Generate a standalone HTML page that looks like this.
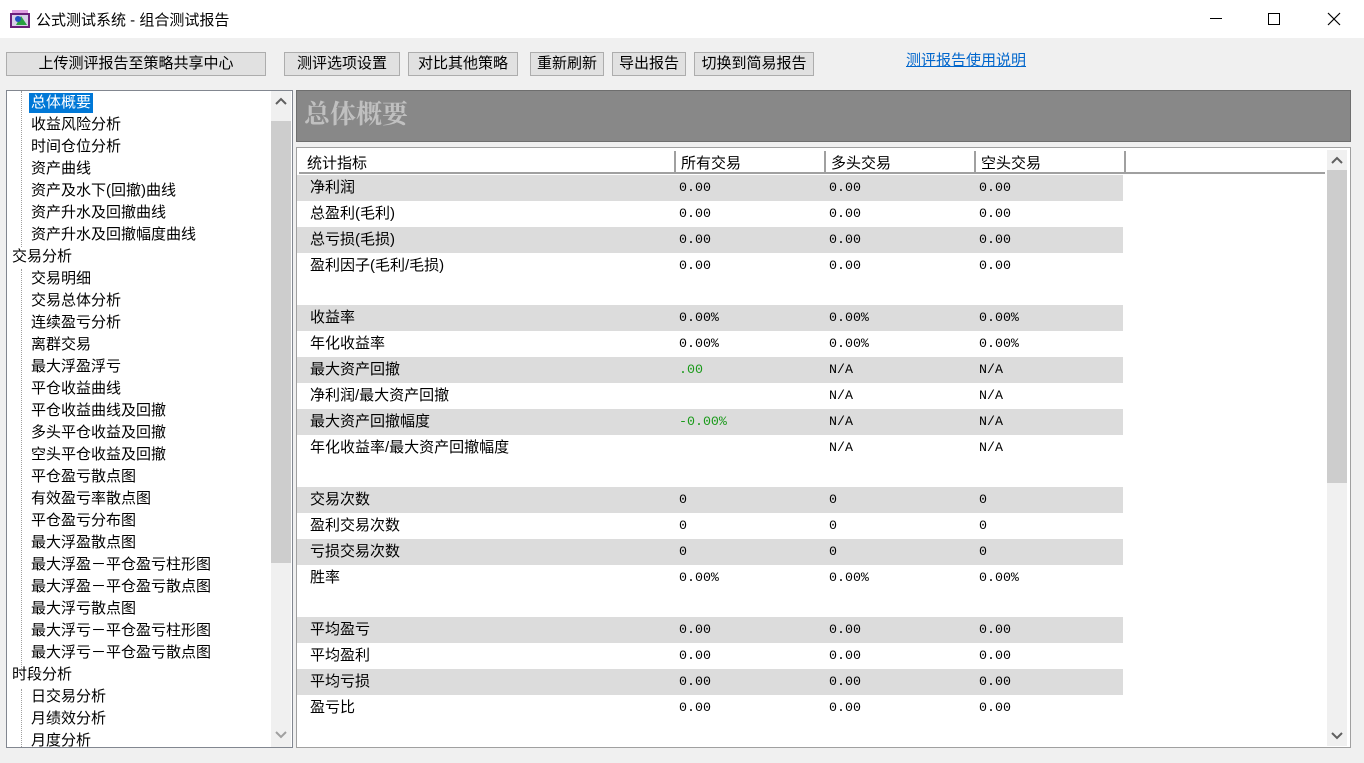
<!DOCTYPE html>
<html><head><meta charset="utf-8"><style>
*{margin:0;padding:0;box-sizing:border-box}
body{width:1364px;height:763px;background:#f0f0f0;font-family:"Liberation Sans","Noto Sans CJK SC",sans-serif;font-size:15px;color:#000;position:relative;overflow:hidden}
.a{position:absolute}
.title{left:0;top:0;width:1364px;height:38px;background:#fff}
.btn{position:absolute;top:52px;height:24px;background:#e1e1e1;border:1px solid #adadad;text-align:center;line-height:22px;font-size:15px}
.tree{left:6px;top:90px;width:287px;height:658px;background:#fff;border:1px solid #828790;overflow:hidden}
.ti{position:absolute;height:20px;line-height:20px;white-space:nowrap}
.vline{position:absolute;border-left:1px dotted #a0a0a0}
.sb{position:absolute;background:#f0f0f0}
.r{position:absolute;left:0;width:826px;height:26px;line-height:26px;font-size:15px}
.r span{position:absolute}
.m{font-family:"Liberation Mono","Noto Sans CJK SC",monospace;font-size:13.3px}
</style></head><body>
<div class="a title">
 <svg class="a" style="left:10px;top:10px" width="20" height="18"><rect x="0" y="3" width="20" height="15" fill="#6b1f7a"/><rect x="2" y="5" width="16" height="11" fill="#d8d0e8"/><polygon points="6,15 11,6 17,15" fill="#2aa040"/><circle cx="8" cy="9" r="3" fill="#2050c0"/><rect x="2" y="0" width="16" height="3" fill="#e0a0e0"/></svg>
 <div class="a" style="left:36px;top:9px;font-size:15px">公式测试系统 - 组合测试报告</div>
 <div class="a" style="left:1210px;top:18px;width:12px;border-top:1px solid #000"></div>
 <div class="a" style="left:1268px;top:13px;width:12px;height:12px;border:1px solid #000"></div>
 <svg class="a" style="left:1327px;top:12px" width="14" height="14"><path d="M1 1L13 13M13 1L1 13" stroke="#000" stroke-width="1.2"/></svg>
</div>
<div class="btn" style="left:6px;width:260px">上传测评报告至策略共享中心</div>
<div class="btn" style="left:284px;width:116px">测评选项设置</div>
<div class="btn" style="left:408px;width:110px">对比其他策略</div>
<div class="btn" style="left:530px;width:74px">重新刷新</div>
<div class="btn" style="left:612px;width:74px">导出报告</div>
<div class="btn" style="left:694px;width:120px">切换到简易报告</div>
<div class="a" style="left:906px;top:49px;color:#0066cc;text-decoration:underline">测评报告使用说明</div>

<div class="a tree">
 <div class="vline" style="left:14px;top:0;height:156px"></div>
 <div class="vline" style="left:14px;top:178px;height:400px"></div>
 <div class="vline" style="left:14px;top:598px;height:70px"></div>
 <div class="ti" style="left:22px;top:2px;background:#0078d7;color:#fff;padding:0 2px">总体概要</div>
 <div class="ti" style="left:24px;top:24px">收益风险分析</div>
 <div class="ti" style="left:24px;top:46px">时间仓位分析</div>
 <div class="ti" style="left:24px;top:68px">资产曲线</div>
 <div class="ti" style="left:24px;top:90px">资产及水下(回撤)曲线</div>
 <div class="ti" style="left:24px;top:112px">资产升水及回撤曲线</div>
 <div class="ti" style="left:24px;top:134px">资产升水及回撤幅度曲线</div>
 <div class="ti" style="left:5px;top:156px">交易分析</div>
 <div class="ti" style="left:24px;top:178px">交易明细</div>
 <div class="ti" style="left:24px;top:200px">交易总体分析</div>
 <div class="ti" style="left:24px;top:222px">连续盈亏分析</div>
 <div class="ti" style="left:24px;top:244px">离群交易</div>
 <div class="ti" style="left:24px;top:266px">最大浮盈浮亏</div>
 <div class="ti" style="left:24px;top:288px">平仓收益曲线</div>
 <div class="ti" style="left:24px;top:310px">平仓收益曲线及回撤</div>
 <div class="ti" style="left:24px;top:332px">多头平仓收益及回撤</div>
 <div class="ti" style="left:24px;top:354px">空头平仓收益及回撤</div>
 <div class="ti" style="left:24px;top:376px">平仓盈亏散点图</div>
 <div class="ti" style="left:24px;top:398px">有效盈亏率散点图</div>
 <div class="ti" style="left:24px;top:420px">平仓盈亏分布图</div>
 <div class="ti" style="left:24px;top:442px">最大浮盈散点图</div>
 <div class="ti" style="left:24px;top:464px">最大浮盈－平仓盈亏柱形图</div>
 <div class="ti" style="left:24px;top:486px">最大浮盈－平仓盈亏散点图</div>
 <div class="ti" style="left:24px;top:508px">最大浮亏散点图</div>
 <div class="ti" style="left:24px;top:530px">最大浮亏－平仓盈亏柱形图</div>
 <div class="ti" style="left:24px;top:552px">最大浮亏－平仓盈亏散点图</div>
 <div class="ti" style="left:5px;top:574px">时段分析</div>
 <div class="ti" style="left:24px;top:596px">日交易分析</div>
 <div class="ti" style="left:24px;top:618px">月绩效分析</div>
 <div class="ti" style="left:24px;top:640px">月度分析</div>
 <div class="sb" style="left:264px;top:0;width:20px;height:656px"></div>
 <div class="sb" style="left:264px;top:30px;width:20px;height:442px;background:#cdcdcd"></div>
 <svg class="a" style="left:268px;top:6px" width="12" height="8"><path d="M1 7L6 2L11 7" stroke="#606060" stroke-width="2" fill="none"/></svg>
 <svg class="a" style="left:268px;top:640px" width="12" height="8"><path d="M1 1L6 6L11 1" stroke="#a0a0a0" stroke-width="2" fill="none"/></svg>
</div>

<div class="a" style="left:296px;top:90px;width:1055px;height:52px;background:#888;border:1px solid #6e6e6e"></div>
<div class="a" style="left:304px;top:94px;font-size:26px;font-weight:bold;color:#c0c0c0;font-family:'Noto Serif CJK SC','Liberation Serif',serif">总体概要</div>

<div class="a" style="left:296px;top:147px;width:1055px;height:601px;background:#fff;border:1px solid #a0a0a0">
 <div class="a" style="left:2px;top:2px;width:1026px;height:24px;border-bottom:2px solid #a0a0a0;background:#fff">
  <span class="a" style="left:8px;top:2px">统计指标</span>
  <div class="a" style="left:375px;top:1px;height:22px;border-left:2px solid #a0a0a0"></div>
  <span class="a" style="left:382px;top:2px">所有交易</span>
  <div class="a" style="left:525px;top:1px;height:22px;border-left:2px solid #a0a0a0"></div>
  <span class="a" style="left:532px;top:2px">多头交易</span>
  <div class="a" style="left:675px;top:1px;height:22px;border-left:2px solid #a0a0a0"></div>
  <span class="a" style="left:682px;top:2px">空头交易</span>
  <div class="a" style="left:825px;top:1px;height:22px;border-left:2px solid #a0a0a0"></div>
 </div>
 <div class="a" style="left:1030px;top:2px;width:20px;height:596px;background:#f0f0f0"></div>
 <div class="a" style="left:1030px;top:22px;width:20px;height:313px;background:#cdcdcd"></div>
 <svg class="a" style="left:1034px;top:8px" width="12" height="8"><path d="M1 7L6 2L11 7" stroke="#606060" stroke-width="2" fill="none"/></svg>
 <svg class="a" style="left:1034px;top:584px" width="12" height="8"><path d="M1 1L6 6L11 1" stroke="#606060" stroke-width="2" fill="none"/></svg>

 <div class="r" style="top:27px;background:#dcdcdc"><span style="left:13px">净利润</span><span class="m" style="left:382px">0.00</span><span class="m" style="left:532px">0.00</span><span class="m" style="left:682px">0.00</span></div>
 <div class="r" style="top:53px"><span style="left:13px">总盈利(毛利)</span><span class="m" style="left:382px">0.00</span><span class="m" style="left:532px">0.00</span><span class="m" style="left:682px">0.00</span></div>
 <div class="r" style="top:79px;background:#dcdcdc"><span style="left:13px">总亏损(毛损)</span><span class="m" style="left:382px">0.00</span><span class="m" style="left:532px">0.00</span><span class="m" style="left:682px">0.00</span></div>
 <div class="r" style="top:105px"><span style="left:13px">盈利因子(毛利/毛损)</span><span class="m" style="left:382px">0.00</span><span class="m" style="left:532px">0.00</span><span class="m" style="left:682px">0.00</span></div>
 <div class="r" style="top:157px;background:#dcdcdc"><span style="left:13px">收益率</span><span class="m" style="left:382px">0.00%</span><span class="m" style="left:532px">0.00%</span><span class="m" style="left:682px">0.00%</span></div>
 <div class="r" style="top:183px"><span style="left:13px">年化收益率</span><span class="m" style="left:382px">0.00%</span><span class="m" style="left:532px">0.00%</span><span class="m" style="left:682px">0.00%</span></div>
 <div class="r" style="top:209px;background:#dcdcdc"><span style="left:13px">最大资产回撤</span><span class="m" style="left:382px;color:#1a9a1a">.00</span><span class="m" style="left:532px">N/A</span><span class="m" style="left:682px">N/A</span></div>
 <div class="r" style="top:235px"><span style="left:13px">净利润/最大资产回撤</span><span class="m" style="left:532px">N/A</span><span class="m" style="left:682px">N/A</span></div>
 <div class="r" style="top:261px;background:#dcdcdc"><span style="left:13px">最大资产回撤幅度</span><span class="m" style="left:382px;color:#1a9a1a">-0.00%</span><span class="m" style="left:532px">N/A</span><span class="m" style="left:682px">N/A</span></div>
 <div class="r" style="top:287px"><span style="left:13px">年化收益率/最大资产回撤幅度</span><span class="m" style="left:532px">N/A</span><span class="m" style="left:682px">N/A</span></div>
 <div class="r" style="top:339px;background:#dcdcdc"><span style="left:13px">交易次数</span><span class="m" style="left:382px">0</span><span class="m" style="left:532px">0</span><span class="m" style="left:682px">0</span></div>
 <div class="r" style="top:365px"><span style="left:13px">盈利交易次数</span><span class="m" style="left:382px">0</span><span class="m" style="left:532px">0</span><span class="m" style="left:682px">0</span></div>
 <div class="r" style="top:391px;background:#dcdcdc"><span style="left:13px">亏损交易次数</span><span class="m" style="left:382px">0</span><span class="m" style="left:532px">0</span><span class="m" style="left:682px">0</span></div>
 <div class="r" style="top:417px"><span style="left:13px">胜率</span><span class="m" style="left:382px">0.00%</span><span class="m" style="left:532px">0.00%</span><span class="m" style="left:682px">0.00%</span></div>
 <div class="r" style="top:469px;background:#dcdcdc"><span style="left:13px">平均盈亏</span><span class="m" style="left:382px">0.00</span><span class="m" style="left:532px">0.00</span><span class="m" style="left:682px">0.00</span></div>
 <div class="r" style="top:495px"><span style="left:13px">平均盈利</span><span class="m" style="left:382px">0.00</span><span class="m" style="left:532px">0.00</span><span class="m" style="left:682px">0.00</span></div>
 <div class="r" style="top:521px;background:#dcdcdc"><span style="left:13px">平均亏损</span><span class="m" style="left:382px">0.00</span><span class="m" style="left:532px">0.00</span><span class="m" style="left:682px">0.00</span></div>
 <div class="r" style="top:547px"><span style="left:13px">盈亏比</span><span class="m" style="left:382px">0.00</span><span class="m" style="left:532px">0.00</span><span class="m" style="left:682px">0.00</span></div>
</div>
</body></html>
